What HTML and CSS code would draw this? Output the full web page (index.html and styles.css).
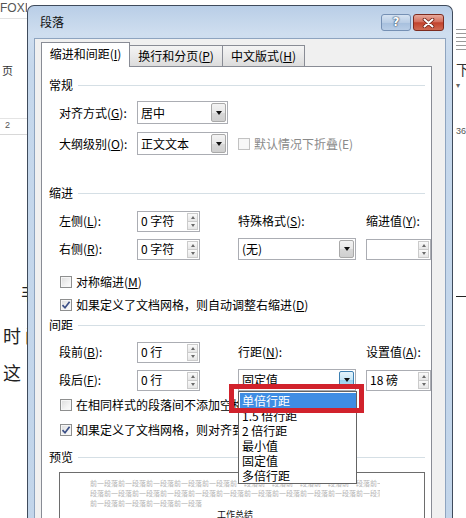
FILE: index.html
```html
<!DOCTYPE html>
<html lang="zh-CN">
<head>
<meta charset="utf-8">
<title>段落</title>
<link rel="stylesheet" href="styles.css">
</head>
<body>
<div class="screen">
  <div class="doc-left">
    <div class="dl-top">FOXIT</div>
    <div class="dl-page">页</div>
    <div class="dl-num">2</div>
    <div class="dl-big dl-fei">非</div>
    <div class="dl-big dl-shi">时间</div>
    <div class="dl-big dl-zhe">这</div>
  </div>

  <div class="dialog">
    <div class="titlebar">
      <span class="title">段落</span>
      <div class="tb-buttons">
        <div class="tb-btn help">?</div>
        <div class="tb-btn close">
          <svg width="13" height="10" viewBox="0 0 13 10">
            <path d="M2.5 1.5 L10.5 8.5 M10.5 1.5 L2.5 8.5" stroke="#6b1f14" stroke-width="3.6" stroke-linecap="round"/>
            <path d="M2.5 1.5 L10.5 8.5 M10.5 1.5 L2.5 8.5" stroke="#ffffff" stroke-width="2" stroke-linecap="round"/>
          </svg>
        </div>
      </div>
    </div>

    <div class="client">
      <div class="tabs">
        <div class="tab active">缩进和间距(<u>I</u>)</div>
        <div class="tab second">换行和分页(<u>P</u>)</div>
        <div class="tab third">中文版式(<u>H</u>)</div>
      </div>

      <div class="panel">
        <div class="group-head"><span>常规</span><i></i></div>
        <div class="grid general">
          <label class="lbl">对齐方式(<u>G</u>):</label>
          <div class="select w91"><span class="val">居中</span><b class="arrow"><i class="tri"></i></b></div>
          <div></div>
          <label class="lbl">大纲级别(<u>O</u>):</label>
          <div class="select w91"><span class="val">正文文本</span><b class="arrow"><i class="tri"></i></b></div>
          <div class="check disabled"><i class="box"></i><span>默认情况下折叠(E)</span></div>
        </div>

        <div class="group-head gh-indent"><span>缩进</span><i></i></div>
        <div class="grid four g-indent">
          <label class="lbl">左侧(<u>L</u>):</label>
          <div class="spin w63"><span class="val">0 字符</span><b class="spinbtns"><i class="up"></i><i class="down"></i></b></div>
          <label class="lbl">特殊格式(<u>S</u>):</label>
          <label class="lbl">缩进值(<u>Y</u>):</label>
          <label class="lbl">右侧(<u>R</u>):</label>
          <div class="spin w63"><span class="val">0 字符</span><b class="spinbtns"><i class="up"></i><i class="down"></i></b></div>
          <div class="select w118"><span class="val">(无)</span><b class="arrow"><i class="tri"></i></b></div>
          <div class="spin w65"><span class="val"></span><b class="spinbtns"><i class="up"></i><i class="down"></i></b></div>
        </div>

        <div class="check c-sym"><i class="box"></i><span>对称缩进(<u>M</u>)</span></div>
        <div class="check c-grid1 checked"><i class="box"><svg width="10" height="10" viewBox="0 0 10 10"><path d="M1.5 5.2 L4 7.8 L8.6 1.8" fill="none" stroke="#3b4f86" stroke-width="1.7"/></svg></i><span>如果定义了文档网格，则自动调整右缩进(<u>D</u>)</span></div>

        <div class="group-head gh-space"><span>间距</span><i></i></div>
        <div class="grid four g-space">
          <label class="lbl">段前(<u>B</u>):</label>
          <div class="spin w63"><span class="val">0 行</span><b class="spinbtns"><i class="up"></i><i class="down"></i></b></div>
          <label class="lbl">行距(<u>N</u>):</label>
          <label class="lbl">设置值(<u>A</u>):</label>
          <label class="lbl">段后(<u>F</u>):</label>
          <div class="spin w63"><span class="val">0 行</span><b class="spinbtns"><i class="up"></i><i class="down"></i></b></div>
          <div class="select w118 focus">
            <span class="val">固定值</span><b class="arrow"><i class="tri"></i></b>
            <ul class="dropdown">
              <li class="sel">单倍行距</li>
              <li>1.5 倍行距</li>
              <li>2 倍行距</li>
              <li>最小值</li>
              <li>固定值</li>
              <li>多倍行距</li>
            </ul>
            <div class="redbox"></div>
          </div>
          <div class="spin w65"><span class="val">18 磅</span><b class="spinbtns"><i class="up"></i><i class="down"></i></b></div>
        </div>

        <div class="check c-same"><i class="box"></i><span>在相同样式的段落间不添加空格(<u>C</u>)</span></div>
        <div class="check c-grid2 checked"><i class="box"><svg width="10" height="10" viewBox="0 0 10 10"><path d="M1.5 5.2 L4 7.8 L8.6 1.8" fill="none" stroke="#3b4f86" stroke-width="1.7"/></svg></i><span>如果定义了文档网格，则对齐到网格(<u>W</u>)</span></div>

        <div class="group-head gh-preview"><span>预览</span><i></i></div>
        <div class="preview">
          <div class="pv-line">前一段落前一段落前一段落前一段落前一段落前一段落前一段落前一段落前一段落前一段落前一段落</div>
          <div class="pv-line">段落前一段落前一段落前一段落前一段落前一段落前一段落前一段落前一段落前一段落前一段落</div>
          <div class="pv-line">前一段落前一段落前一段落前一段落</div>
          <div class="pv-title">工作总结</div>
        </div>
      </div>
    </div>
  </div>

  <div class="doc-right">
    <div class="dr-ruler"><i></i><i></i><i></i><i></i><i></i><i></i></div>
    <div class="dr-xia">下</div>
    <div class="dr-caret">▾</div>
    <div class="dr-num">36</div>
    <div class="dr-rule"></div>
  </div>
</div>
</body>
</html>
```

FILE: styles.css
```css
* { box-sizing: border-box; }
html, body { margin: 0; padding: 0; }
body {
  width: 466px;
  height: 518px;
  overflow: hidden;
  background: #fff;
  font-family: "Noto Sans CJK SC", "Noto Sans", sans-serif;
  font-size: 12px;
  color: #000;
}
u { text-decoration: underline; text-underline-offset: 1px; }

.screen {
  display: flex;
  align-items: flex-start;
  height: 518px;
  overflow: hidden;
}

/* ---------- Word document behind (left) ---------- */
.doc-left {
  width: 27px;
  height: 518px;
  flex: none;
  overflow: hidden;
  color: #333;
}
.dl-top {
  font-family: "Liberation Sans", sans-serif;
  font-size: 12px;
  line-height: 14px;
  padding-top: 1px;
  height: 19px;
  border-bottom: 1px solid #e2e2e2;
  white-space: nowrap;
  color: #555;
}
.dl-page {
  margin-top: 44px;
  padding-left: 2px;
  font-size: 11px;
  line-height: 14px;
  height: 56px;
  border-bottom: 1px solid #e4e4e4;
}
.dl-num {
  padding-left: 5px;
  font-family: "Liberation Sans", sans-serif;
  font-size: 9px;
  line-height: 12px;
  height: 16px;
  border-bottom: 1px solid #d8d8d8;
  color: #555;
}
.dl-big {
  font-size: 18px;
  line-height: 22px;
  color: #222;
  white-space: nowrap;
}
.dl-fei { margin-top: 146px; padding-left: 21px; }
.dl-shi { margin-top: 21px; padding-left: 3px; letter-spacing: 4px; }
.dl-zhe { margin-top: 15px; padding-left: 3px; }

/* ---------- Word document behind (right) ---------- */
.doc-right {
  width: 13px;
  height: 518px;
  flex: none;
  overflow: hidden;
  padding-left: 3px;
  color: #333;
}
.dr-ruler {
  margin-top: 29px;
  display: flex;
  flex-direction: column;
  gap: 3px;
}
.dr-ruler i { display: block; height: 1px; background: #9a9a9a; }
.dr-xia { margin-top: 11px; font-size: 14px; line-height: 16px; }
.dr-caret { font-size: 8px; line-height: 10px; color: #666; margin-top: 3px; }
.dr-num {
  margin-top: 36px;
  font-family: "Liberation Sans", sans-serif;
  font-size: 9px;
  line-height: 10px;
  color: #555;
}
.dr-rule { margin-top: 160px; height: 1px; background: #222; }

/* ---------- Dialog ---------- */
.dialog {
  width: 426px;
  height: 530px;
  margin-top: 5px;
  flex: none;
  border: 1px solid #3f4b5c;
  border-bottom: 0;
  border-radius: 7px 7px 0 0;
  background: linear-gradient(to bottom, #b9cee7 0, #cfdeef 28px, #c6d8ec 60px, #c2d5ea 100%);
  display: flex;
  flex-direction: column;
}
.titlebar {
  height: 32px;
  flex: none;
  display: flex;
  align-items: flex-start;
  padding: 0 8px 0 12px;
}
.title {
  line-height: 32px;
  font-size: 12px;
  color: #111;
}
.tb-buttons {
  margin-left: auto;
  margin-top: 8px;
  display: flex;
  gap: 2px;
}
.tb-btn {
  height: 17px;
  border-radius: 3px;
  display: flex;
  align-items: center;
  justify-content: center;
}
.help {
  width: 30px;
  border: 1px solid #7590b4;
  background: linear-gradient(to bottom, #d6e3f2 0, #b9cde5 50%, #a6bfdd 51%, #b8cde6 100%);
  color: #fff;
  font-family: "DejaVu Sans", sans-serif;
  font-weight: bold;
  font-size: 12px;
  line-height: 15px;
  text-shadow: 0 0 1px #364a66, 0 0 1px #364a66, 0 0 2px #4a607f;
}
.close {
  width: 31px;
  border: 1px solid #7d2b1f;
  background: linear-gradient(to bottom, #e8a99c 0, #d4705e 45%, #c2422c 52%, #cf6a52 100%);
}

.client {
  flex: 1;
  margin: 0 6px;
  border: 1px solid #8ea4bf;
  border-bottom: 0;
  background: #f0f0f0;
  padding: 0 13px 0 6px;
  overflow: hidden;
}

/* ---------- Tabs ---------- */
.tabs {
  display: flex;
  align-items: flex-end;
  height: 28px;
  padding-top: 3px;
}
.tab {
  height: 21px;
  margin-bottom: 1px;
  border: 1px solid #898c95;
  border-bottom: 0;
  background: linear-gradient(to bottom, #f4f4f4 0, #e9e9e9 50%, #dcdcdc 100%);
  display: flex;
  align-items: center;
  justify-content: center;
  font-size: 12px;
  line-height: 14px;
  white-space: nowrap;
}
.tab.active {
  position: relative;
  z-index: 2;
  height: 25px;
  margin-bottom: 0;
  width: 89px;
  background: #fff;
  padding-bottom: 2px;
}
.tab.second { width: 93px; border-left: 0; }
.tab.third { width: 82px; border-left: 0; }

/* ---------- Panel ---------- */
.panel {
  margin-top: -1px;
  height: 470px;
  border: 1px solid #898c95;
  background: #fff;
  padding: 10px 6px 0 7px;
}
.group-head {
  display: flex;
  align-items: center;
  height: 16px;
  gap: 5px;
  line-height: 16px;
}
.group-head i {
  flex: 1;
  height: 1px;
  background: #d5dfe5;
}
.gh-indent { margin-top: 30px; }
.gh-space { margin-top: 4px; }
.gh-preview { margin-top: 11px; }

.grid {
  display: grid;
  margin-left: 10px;
}
.general {
  grid-template-columns: 78px 101px auto;
  grid-template-rows: 23px 23px;
  row-gap: 8px;
  margin-top: 8px;
}
.four {
  grid-template-columns: 78px 101px 128px auto;
  grid-template-rows: 22px 22px;
  row-gap: 6px;
}
.g-indent { margin-top: 9px; }
.g-space { margin-top: 8px; }

.lbl {
  align-self: center;
  line-height: 16px;
  white-space: nowrap;
}

/* select / combobox */
.select {
  position: relative;
  display: flex;
  align-items: center;
  border: 1px solid #abadb3;
  background: #fff;
  height: 100%;
}
.w91 { width: 91px; }
.w118 { width: 118px; }
.select .val {
  flex: 1;
  padding-left: 3px;
  line-height: 16px;
  white-space: nowrap;
}
.arrow {
  width: 15px;
  align-self: stretch;
  margin: 1px;
  border: 1px solid #a9a9a9;
  border-radius: 2px;
  background: linear-gradient(to bottom, #f3f3f3 0, #e8e8e8 50%, #d8d8d8 51%, #cfcfcf 100%);
  display: flex;
  align-items: center;
  justify-content: center;
}
.tri {
  width: 0;
  height: 0;
  border-left: 3.5px solid transparent;
  border-right: 3.5px solid transparent;
  border-top: 4px solid #111;
}
.select.focus .arrow {
  border-color: #3c7fb1;
  background: linear-gradient(to bottom, #e5f4fc 0, #c4e5f6 50%, #98d1ef 51%, #b2ddf2 100%);
}

/* spin box */
.spin {
  display: flex;
  align-items: center;
  align-self: center;
  height: 21px;
  border: 1px solid #abadb3;
  background: #fff;
}
.w63 { width: 63px; }
.w65 { width: 65px; }
.spin .val {
  flex: 1;
  padding-left: 3px;
  line-height: 16px;
  white-space: nowrap;
}
.spinbtns {
  width: 11px;
  align-self: stretch;
  margin: 1px;
  display: flex;
  flex-direction: column;
}
.spinbtns i {
  flex: 1;
  border: 1px solid #cbcbcb;
  background: linear-gradient(to bottom, #fafafa, #e6e6e6);
  display: flex;
  align-items: center;
  justify-content: center;
}
.spinbtns i + i { border-top: 0; }
.spinbtns i::before {
  content: "";
  width: 0;
  height: 0;
  border-left: 2.5px solid transparent;
  border-right: 2.5px solid transparent;
}
.spinbtns .up::before { border-bottom: 3px solid #6a6a6a; }
.spinbtns .down::before { border-top: 3px solid #6a6a6a; }

/* checkbox */
.check {
  display: flex;
  align-items: center;
  gap: 4px;
  height: 16px;
  line-height: 16px;
  white-space: nowrap;
}
.check .box {
  width: 12px;
  height: 12px;
  flex: none;
  border: 1px solid #8e8f8f;
  background: linear-gradient(135deg, #dcdcdc 0, #f2f2f2 60%, #fdfdfd 100%);
  box-shadow: inset 0 0 0 1px #f6f6f6;
  display: flex;
  align-items: center;
  justify-content: center;
}
.check.disabled { color: #8a8a8a; align-self: center; }
.check.disabled .box { border-color: #c2c2c2; background: #f7f7f7; }
.c-sym, .c-grid1, .c-same, .c-grid2 { margin-left: 11px; }
.c-sym { margin-top: 14px; }
.c-grid1 { margin-top: 7px; }
.c-same { margin-top: 6px; }
.c-grid2 { margin-top: 9px; }

/* dropdown overlay */
.dropdown {
  position: absolute;
  left: -1px;
  top: 21px;
  width: 119px;
  margin: 0;
  padding: 1px 0 0 1px;
  list-style: none;
  border: 1px solid #646464;
  background: #fff;
  z-index: 5;
}
.dropdown li {
  height: 15px;
  line-height: 15px;
  padding-left: 2px;
  white-space: nowrap;
}
.dropdown li.sel {
  background: #3f8de3;
  color: #fff;
}
.redbox {
  position: absolute;
  left: -10px;
  top: 14px;
  width: 135px;
  height: 29px;
  border: 5px solid #d1222c;
  z-index: 6;
}

/* preview */
.preview {
  margin: 7px 0 0 10px;
  height: 80px;
  border: 1px solid #6d6d6d;
  padding: 5px 44px 0 30px;
  overflow: hidden;
}
.pv-line {
  font-size: 7px;
  line-height: 10px;
  height: 10px;
  color: #b4b4b4;
  white-space: nowrap;
  overflow: hidden;
}
.pv-title {
  margin-top: 2px;
  text-align: center;
  font-size: 9px;
  line-height: 10px;
  color: #111;
}
```
